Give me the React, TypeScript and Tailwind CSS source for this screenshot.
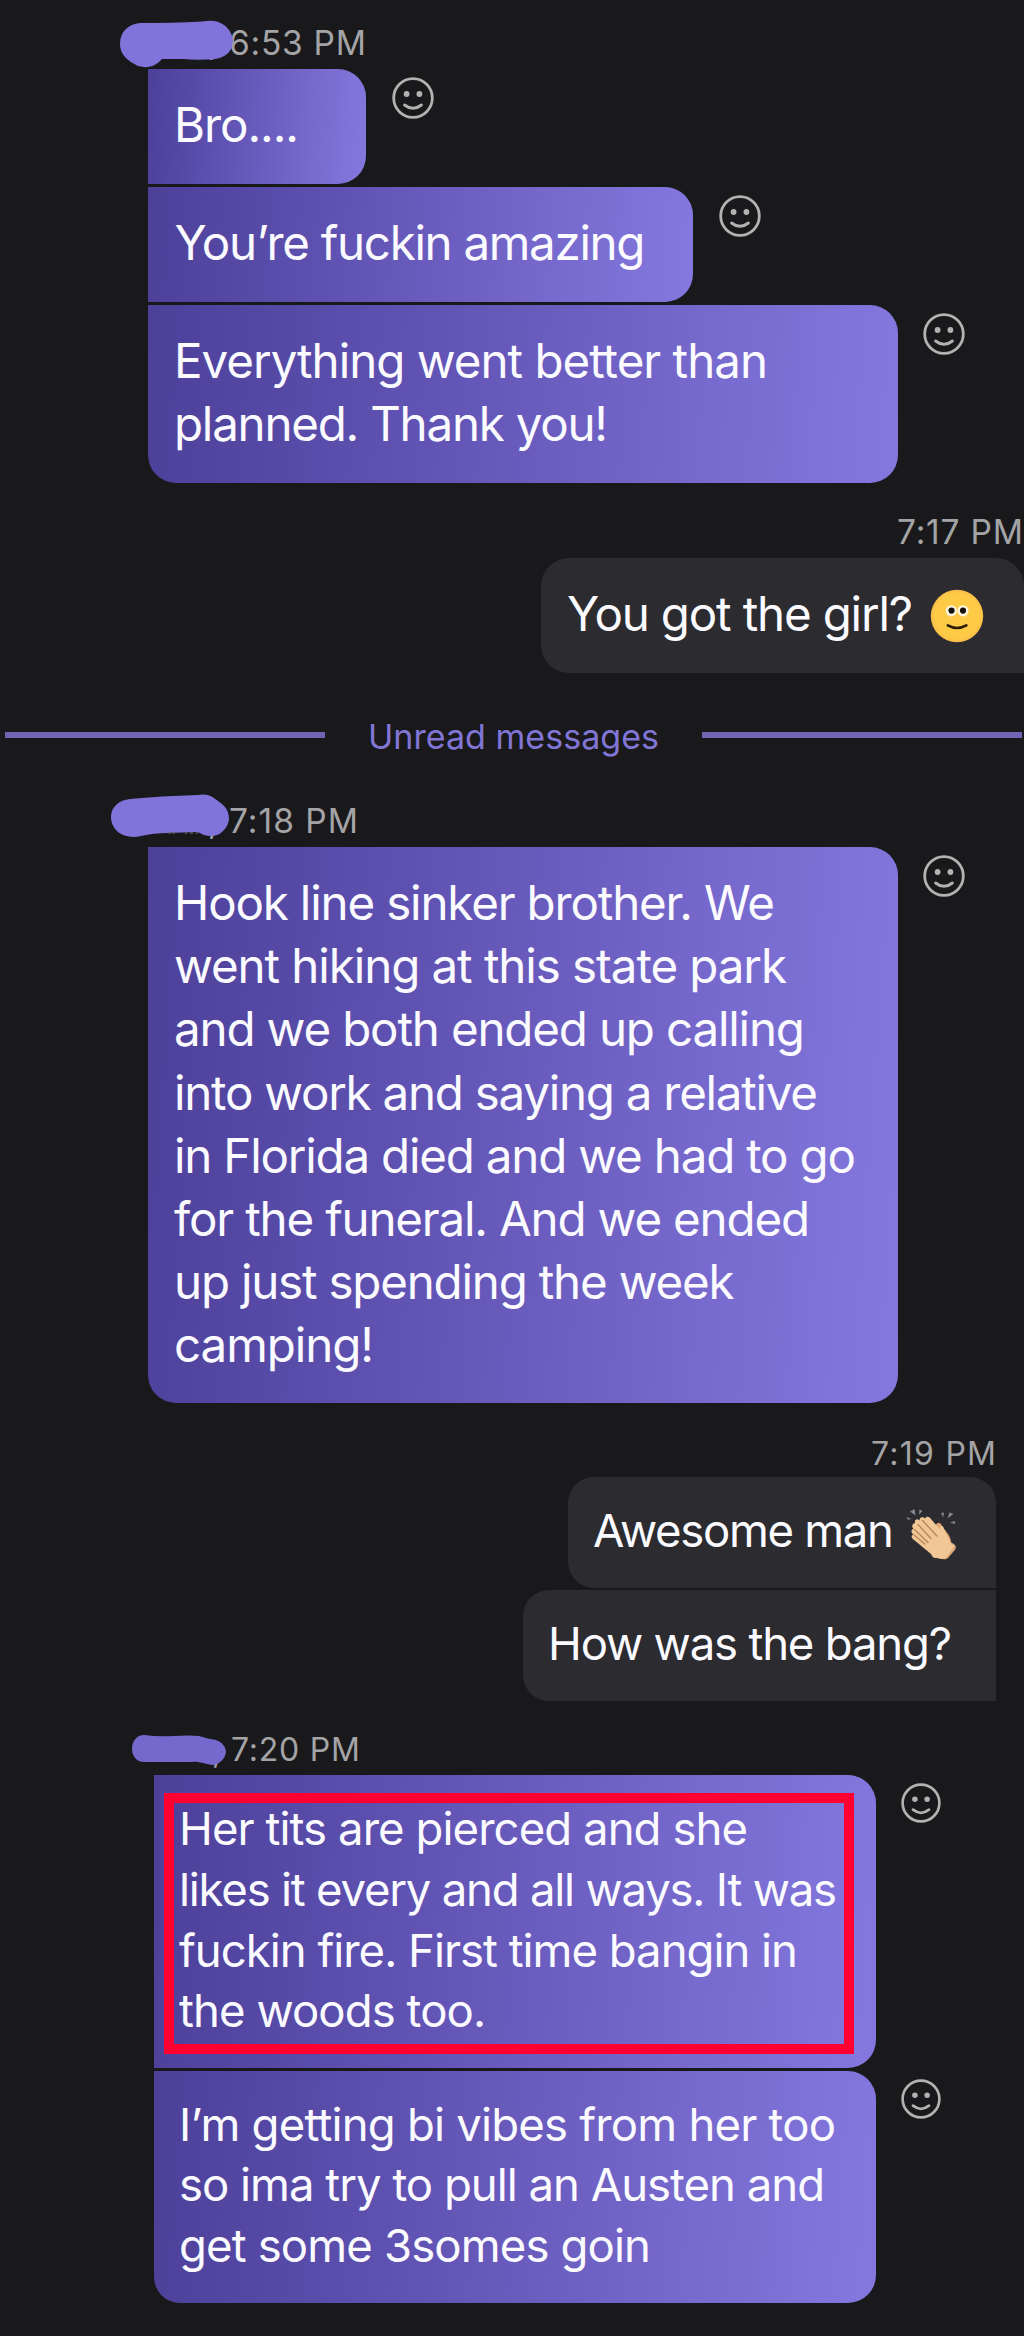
import { useLayoutEffect, useRef, useState, type ReactNode } from "react";

type LineData = { text: string; width: number };

/* One line of text whose tracking is adjusted so it spans the given width. */
function Line({ text, width }: LineData) {
  const ref = useRef<HTMLSpanElement>(null);
  const [spacing, setSpacing] = useState(0);
  useLayoutEffect(() => {
    if (!ref.current) return;
    const natural = ref.current.getBoundingClientRect().width;
    setSpacing((width - natural) / (text.length - 1));
  }, [text, width]);
  return (
    <span className="block whitespace-nowrap">
      <span ref={ref} style={{ letterSpacing: `${spacing}px` }}>
        {text}
      </span>
    </span>
  );
}

function Smile({ className }: { className: string }) {
  return (
    <svg viewBox="0 0 42 42" className={className} fill="none" stroke="#b2b2b3" strokeLinecap="round">
      <circle cx="21" cy="21" r="19.3" strokeWidth="2.8" />
      <circle cx="14.6" cy="17" r="2.9" fill="#b2b2b3" stroke="none" />
      <circle cx="27.4" cy="17" r="2.9" fill="#b2b2b3" stroke="none" />
      <path d="M12.6 28Q21 34.6 29.4 28" strokeWidth="2.9" />
    </svg>
  );
}

function SmileyEmoji() {
  return (
    <svg viewBox="0 0 54 54" className="absolute left-[389px] top-[31px] size-[54px]">
      <defs>
        <radialGradient id="face" cx="50%" cy="50%" r="50%">
          <stop offset="0.85" stopColor="#fecb47" />
          <stop offset="1" stopColor="#f8bd48" />
        </radialGradient>
      </defs>
      <circle cx="27" cy="27" r="26.2" fill="url(#face)" />
      <circle cx="21.3" cy="21.8" r="5.6" fill="#fff4dc" />
      <circle cx="33" cy="21.8" r="5.6" fill="#fff4dc" />
      <circle cx="21.5" cy="21.6" r="3.1" fill="#14100a" />
      <circle cx="33" cy="21.6" r="3.1" fill="#14100a" />
      <path d="M17.8 36.4Q27 41.6 36.4 36.4" fill="none" stroke="#2b1a05" strokeWidth="2.6" strokeLinecap="round" />
    </svg>
  );
}

function ClapEmoji() {
  return (
    <svg viewBox="0 0 54 54" className="absolute left-[338px] top-[31px] size-[54px]">
      <g fill="#85888f">
        <path d="M4 3.500l5.500 4L8.500 1zM13 6.500l3.500-3.500-3-1.500zM1 9l4.500 2-4 .8zM35 5l2.200 4.500L38 4.500zM41.500 10.500l6-4.500-4-1.500zM44 14.500l5 1.500v-3z" />
      </g>
      <path d="M29 20c1-6 5-7 7-2l6 8c2 3 3 6 3 8l4 3c1.500 2 1 4-1 6l-6 7c-3 2.500-8 1-12-1L22 36z" fill="#e0a878" />
      <path
        d="M9 15c-1-4 2.500-5 4.500-2.500 0-4 3.500-4 5.500-2 1.500-2.500 4-2 6 .5l9 10.500c-.500-4 2-5 3.500-2 1 2.500 1.500 4.500 3 7 2.500 3.500 3.500 6.500 4 9l4 2-8 12c-3 2-7 1-10 .5-3 .5-4-1-5.500-4L7.500 31.500c-2.500-2-2.500-4.500 0-5-3-2-2.500-5 0-5.500-2-2-1.500-5.500 1.500-6z"
        fill="#f1c796"
      />
      <path d="M12 16.500L25 30.500M16.500 12.500L31 28M8.500 21.500L22 34.500M8 27l11 9" stroke="#b98558" strokeWidth="1.300" fill="none" strokeLinecap="round" />
    </svg>
  );
}

function Incoming({
  bubble,
  smile,
  lines,
  children,
}: {
  bubble: string;
  smile: string;
  lines: LineData[];
  children?: ReactNode;
}) {
  return (
    <div className="flex items-start">
      <div
        className={`relative shrink-0 rounded-r-[28px] bg-[linear-gradient(94deg,#4c4099_0%,#5f52b2_35%,#7466c9_68%,#8478df_100%)] ${bubble}`}
      >
        {lines.map((l) => (
          <Line key={l.text} {...l} />
        ))}
        {children}
      </div>
      <Smile className={`shrink-0 ${smile}`} />
    </div>
  );
}

export default function App() {
  return (
    <main className="flex h-[2336px] w-[1024px] flex-col overflow-hidden bg-[#19191b] font-['Inter',sans-serif] text-[47.500px] leading-[63.200px] text-[#fafaff]">
      <header className="relative h-[69px] pl-[229px] pt-[21px] text-[33.500px] leading-[44px] text-[#a4a4a6]">
        <Line text="6:53 PM" width={137} />
        <span className="absolute left-[208px] top-[20px]">,</span>
        <svg viewBox="0 0 120 50" className="absolute left-[118px] top-[19px] h-[50px] w-[120px]">
          <path d="M22 4Q55 4 84 2.500C101-1 112 7 115 20C115 34 106 41 88 40.500Q75 41 66 40H44C38 47 30 50 20 47C10 42 2 36 2 25C2 13 10 5 22 4Z" fill="#8074da" />
        </svg>
      </header>
      <section className="flex flex-col gap-[3px] pl-[148px]">
        <Incoming bubble="h-[115px] w-[218px] pl-[26px] pt-[24px]" smile="ml-[26px] mt-[8px] size-[42px]" lines={[{ text: "Bro....", width: 125 }]} />
        <Incoming bubble="h-[115px] w-[544.500px] pl-[26.500px] pt-[24px]" smile="ml-[26px] mt-[8px] size-[42px]" lines={[{ text: "You’re fuckin amazing", width: 471 }]} />
        <Incoming
          bubble="h-[178px] w-[749.500px] rounded-bl-[28px] pl-[26px] pt-[24px]"
          smile="ml-[25.500px] mt-[8px] size-[42px]"
          lines={[
            { text: "Everything went better than", width: 594 },
            { text: "planned. Thank you!", width: 434 },
          ]}
        />
      </section>

      <section className="flex flex-col items-end pt-[27px]">
        <div className="h-[48px] w-[127px] text-[33.500px] leading-[44px] text-[#a4a4a6]">
          <Line text="7:17 PM" width={126} />
        </div>
        <div className="relative h-[115px] w-[483px] rounded-t-[28px] rounded-bl-[28px] bg-[#2b2b30] pl-[26px] pt-[24px]">
          <Line text="You got the girl?" width={346} />
          <SmileyEmoji />
        </div>
      </section>

      <div className="mt-[40px] flex h-[48px] items-center pl-[5px] text-[34px] leading-[48px] text-[#8175d6]">
        <div className="mb-[5px] h-[6px] w-[320px] bg-[#7064b4]" />
        <div className="w-[376.500px] pl-[43px]">
          <Line text="Unread messages" width={291} />
        </div>
        <div className="mb-[5px] h-[6px] w-[320px] bg-[#7064b4]" />
      </div>

      <header className="relative h-[86px] pl-[229px] pt-[38px] text-[33.500px] leading-[44px] text-[#a4a4a6]">
        <Line text="7:18 PM" width={129} />
        <span className="absolute left-[208px] top-[38px]">,</span>
        <svg viewBox="0 0 120 46" className="absolute left-[110px] top-[32px] h-[46px] w-[120px]">
          <path d="M20 6Q50 3 88 2C98 0 103 4 108 8C116 13 119 19 119 26C118 36 109 44 100 43C94 43 91 40 87 39C67 40 48 39 31 43C15 47 1 38 1 24C1 14 9 7 20 6Z" fill="#8074da" />
          <path d="M58 40h3M63 40h2M75 40h2M80 40h3M86 40h2" stroke="#5f5f66" strokeWidth="1.500" />
        </svg>
      </header>
      <section className="pl-[148px]">
        <Incoming
          bubble="h-[556px] w-[749.500px] rounded-bl-[28px] pl-[26px] pt-[24px]"
          smile="ml-[25px] mt-[8px] size-[42px]"
          lines={[
            { text: "Hook line sinker brother. We", width: 601 },
            { text: "went hiking at this state park", width: 613 },
            { text: "and we both ended up calling", width: 631 },
            { text: "into work and saying a relative", width: 644 },
            { text: "in Florida died and we had to go", width: 682 },
            { text: "for the funeral. And we ended", width: 636 },
            { text: "up just spending the week", width: 560.5 },
            { text: "camping!", width: 200 },
          ]}
        />
      </section>

      <section className="flex flex-col items-end pr-[28px] pt-[29px] text-[45.500px] leading-[60.800px]">
        <div className="h-[45px] w-[125px] text-[32px] leading-[44px] text-[#a4a4a6]">
          <Line text="7:19 PM" width={125} />
        </div>
        <div className="relative h-[110.500px] w-[428px] rounded-t-[26px] rounded-bl-[26px] bg-[#2b2b30] pl-[25px] pt-[24px]">
          <Line text="Awesome man" width={301} />
          <ClapEmoji />
        </div>
        <div className="mt-[2.500px] h-[110.500px] w-[473px] rounded-l-[26px] bg-[#2b2b30] pl-[25px] pt-[24px]">
          <Line text="How was the bang?" width={404} />
        </div>
      </section>

      <header className="relative h-[74.500px] pl-[231px] pt-[27px] text-[32px] leading-[44px] text-[#a4a4a6]">
        <Line text="7:20 PM" width={129} />
        <span className="absolute left-[212px] top-[28px]">,</span>
        <svg viewBox="0 0 100 34" className="absolute left-[130px] top-[33px] h-[34px] w-[100px]">
          <path d="M14 1Q28 3 44 2Q59 1 69 2C76 4 80 5 86 6C92 8 96 13 96 18C95 26 88 31 82 31C74 30 69 27 62 28H16C7 29 2 22 2 15C2 7 7 1 14 1Z" fill="#7669cd" />
        </svg>
      </header>
      <section className="flex flex-col gap-[3px] pl-[154px] text-[45.500px] leading-[60.800px]">
        <Incoming
          bubble="h-[293px] w-[722px] pl-[25px] pt-[24px]"
          smile="ml-[24.500px] mt-[8px] size-[40px]"
          lines={[
            { text: "Her tits are pierced and she", width: 569 },
            { text: "likes it every and all ways. It was", width: 658 },
            { text: "fuckin fire. First time bangin in", width: 619 },
            { text: "the woods too.", width: 307 },
          ]}
        >
          <div className="absolute left-[9.500px] top-[18px] h-[261px] w-[690.500px] border-[10px] border-[#ff0030]" />
        </Incoming>
        <Incoming
          bubble="h-[232px] w-[722px] rounded-bl-[26px] pl-[25px] pt-[23.500px]"
          smile="ml-[24.500px] mt-[8px] size-[40px]"
          lines={[
            { text: "I’m getting bi vibes from her too", width: 657 },
            { text: "so ima try to pull an Austen and", width: 646 },
            { text: "get some 3somes goin", width: 472 },
          ]}
        />
      </section>
    </main>
  );
}
